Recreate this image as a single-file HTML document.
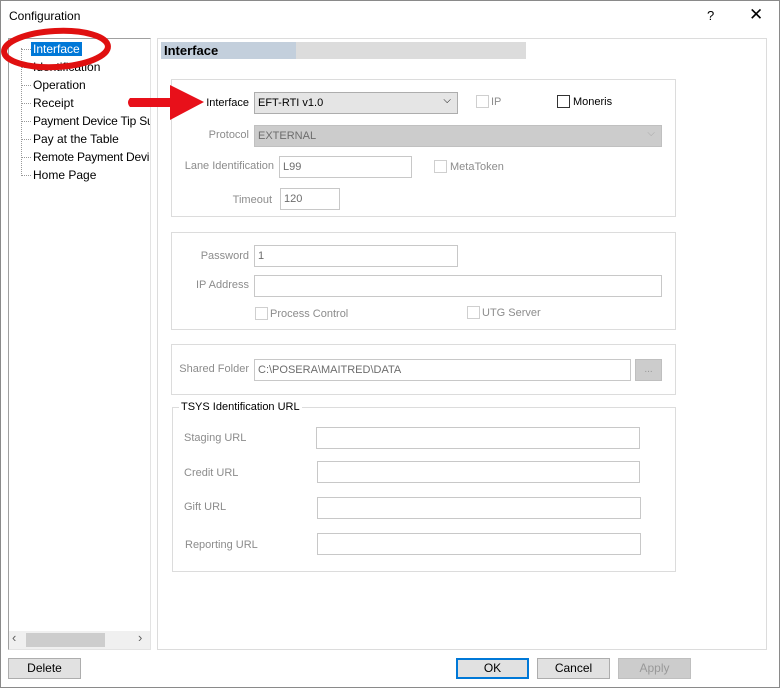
<!DOCTYPE html>
<html><head><meta charset="utf-8"><style>
*{margin:0;padding:0;box-sizing:border-box}
body{width:780px;height:688px;background:#fff;font-family:"Liberation Sans",Arial,sans-serif;font-size:12px;color:#000;position:relative;overflow:hidden}
.a{position:absolute;white-space:nowrap}
.g{color:#8c8c8c;font-size:11px}
.r{position:absolute;white-space:nowrap;text-align:right;width:120px;color:#8c8c8c;font-size:11px}
.box{position:absolute;border:1px solid #dcdcdc}
.in{position:absolute;border:1px solid #c8c8c8;background:#fff;height:22px;padding:4px 3px 0;font-size:11px;color:#6d6d6d}
.cb{position:absolute;width:13px;height:13px;border:1px solid #cfcfcf;background:#fff}
.btn{position:absolute;height:21px;border:1px solid #adadad;background:#e1e1e1;text-align:center;line-height:19px;font-size:12px}
.tree{font-size:12px;line-height:18px}
.dot{position:absolute;border-top:1px dotted #999;width:10px}
</style></head><body>
<div class="a" style="left:0;top:0;width:780px;height:688px;border:1px solid #8a8a8a;border-top:none"></div>
<div class="a" style="left:0;top:0;width:780px;height:1px;background:#8a8a8a"></div>
<div class="a" style="left:9px;top:9px;font-size:12px">Configuration</div>
<div class="a" style="left:707px;top:8px;font-size:13px">?</div>
<div class="a" style="left:749px;top:5px;font-size:17px;font-weight:300">✕</div>

<!-- tree -->
<div class="a" style="left:8px;top:38px;width:143px;height:612px;border:1px solid #a0a0a0;border-right-color:#e3e3e3;border-bottom-color:#e3e3e3"></div>
<div class="a" style="left:21px;top:48px;height:128px;border-left:1px dotted #999"></div>
<div class="dot" style="left:21px;top:49px"></div><div class="dot" style="left:21px;top:67px"></div><div class="dot" style="left:21px;top:85px"></div><div class="dot" style="left:21px;top:103px"></div><div class="dot" style="left:21px;top:121px"></div><div class="dot" style="left:21px;top:139px"></div><div class="dot" style="left:21px;top:157px"></div><div class="dot" style="left:21px;top:175px"></div>
<div class="a tree" style="left:31px;top:40px;width:119px;overflow:hidden">
<div><span style="background:#0078d7;color:#fff;padding:0 2px">Interface</span></div>
<div style="padding-left:2px">Identification</div>
<div style="padding-left:2px">Operation</div>
<div style="padding-left:2px">Receipt</div>
<div style="padding-left:2px;letter-spacing:-0.2px">Payment Device Tip Su</div>
<div style="padding-left:2px">Pay at the Table</div>
<div style="padding-left:2px;letter-spacing:-0.2px">Remote Payment Devi</div>
<div style="padding-left:2px">Home Page</div>
</div>
<div class="a" style="left:9px;top:631px;width:141px;height:18px;background:#f0f0f0"></div>
<div class="a" style="left:26px;top:633px;width:79px;height:14px;background:#cdcdcd"></div>
<div class="a" style="left:12px;top:630px;font-size:13px;color:#606060">‹</div>
<div class="a" style="left:138px;top:630px;font-size:13px;color:#606060">›</div>

<!-- red ellipse -->
<svg class="a" style="left:0;top:24px" width="118" height="52"><ellipse cx="56" cy="25" rx="52" ry="18" fill="none" stroke="#e01010" stroke-width="6" transform="rotate(-3 56 25)"/></svg>

<!-- right panel -->
<div class="a" style="left:157px;top:38px;width:610px;height:612px;border:1px solid #dcdcdc"></div>
<div class="a" style="left:161px;top:42px;width:135px;height:17px;background:#c3cfdc"></div>
<div class="a" style="left:296px;top:42px;width:230px;height:17px;background:#dcdcdc"></div>
<div class="a" style="left:164px;top:43px;font-weight:bold;font-size:13px">Interface</div>

<div class="box" style="left:171px;top:79px;width:505px;height:138px"></div>
<div class="r" style="left:129px;top:97px;color:#000">Interface</div>
<div class="in" style="left:254px;top:92px;width:204px;background:#e5e5e5;border-color:#adadad;color:#000">EFT-RTI v1.0<span style="position:absolute;right:6px;top:2px;font-size:10px">⌵</span></div>
<div class="cb" style="left:476px;top:95px"></div><div class="a g" style="left:491px;top:96px">IP</div>
<div class="cb" style="left:557px;top:95px;border-color:#333"></div><div class="a" style="left:573px;top:96px;font-size:11px">Moneris</div>
<div class="r" style="left:129px;top:129px">Protocol</div>
<div class="in" style="left:254px;top:125px;width:408px;background:#cccccc;border-color:#c0c0c0">EXTERNAL<span style="position:absolute;right:6px;top:2px;font-size:10px;color:#aaa">⌵</span></div>
<div class="r" style="left:154px;top:160px">Lane Identification</div>
<div class="in" style="left:279px;top:156px;width:133px">L99</div>
<div class="cb" style="left:434px;top:160px"></div><div class="a g" style="left:450px;top:161px">MetaToken</div>
<div class="r" style="left:152px;top:194px">Timeout</div>
<div class="in" style="left:280px;top:188px;width:60px">120</div>

<div class="box" style="left:171px;top:232px;width:505px;height:98px"></div>
<div class="r" style="left:129px;top:250px">Password</div>
<div class="in" style="left:254px;top:245px;width:204px">1</div>
<div class="r" style="left:129px;top:279px">IP Address</div>
<div class="in" style="left:254px;top:275px;width:408px"></div>
<div class="cb" style="left:255px;top:307px"></div><div class="a g" style="left:270px;top:308px">Process Control</div>
<div class="cb" style="left:467px;top:306px"></div><div class="a g" style="left:482px;top:307px">UTG Server</div>

<div class="box" style="left:171px;top:344px;width:505px;height:51px"></div>
<div class="r" style="left:129px;top:363px">Shared Folder</div>
<div class="in" style="left:254px;top:359px;width:377px">C:\POSERA\MAITRED\DATA</div>
<div class="a" style="left:635px;top:359px;width:27px;height:22px;background:#cccccc;border:1px solid #bfbfbf;text-align:center;color:#999;font-size:10px;line-height:20px">...</div>

<div class="box" style="left:172px;top:407px;width:504px;height:165px"></div>
<div class="a" style="left:179px;top:401px;background:#fff;padding:0 2px;font-size:11px">TSYS Identification URL</div>
<div class="a g" style="left:184px;top:432px">Staging URL</div>
<div class="in" style="left:316px;top:427px;width:324px"></div>
<div class="a g" style="left:184px;top:467px">Credit URL</div>
<div class="in" style="left:317px;top:461px;width:323px"></div>
<div class="a g" style="left:184px;top:501px">Gift URL</div>
<div class="in" style="left:317px;top:497px;width:324px"></div>
<div class="a g" style="left:185px;top:539px">Reporting URL</div>
<div class="in" style="left:317px;top:533px;width:324px"></div>

<!-- arrow -->
<svg class="a" style="left:124px;top:82px" width="84" height="42"><path d="M6 16 H46 V3 L80 20 L46 38 V25 H6 Q2 20.5 6 16Z" fill="#e8101a"/></svg>

<!-- buttons -->
<div class="btn" style="left:8px;top:658px;width:73px">Delete</div>
<div class="btn" style="left:456px;top:658px;width:73px;border:2px solid #0078d7;line-height:17px">OK</div>
<div class="btn" style="left:537px;top:658px;width:73px">Cancel</div>
<div class="btn" style="left:618px;top:658px;width:73px;color:#999;border-color:#bfbfbf;background:#ccc">Apply</div>
</body></html>
